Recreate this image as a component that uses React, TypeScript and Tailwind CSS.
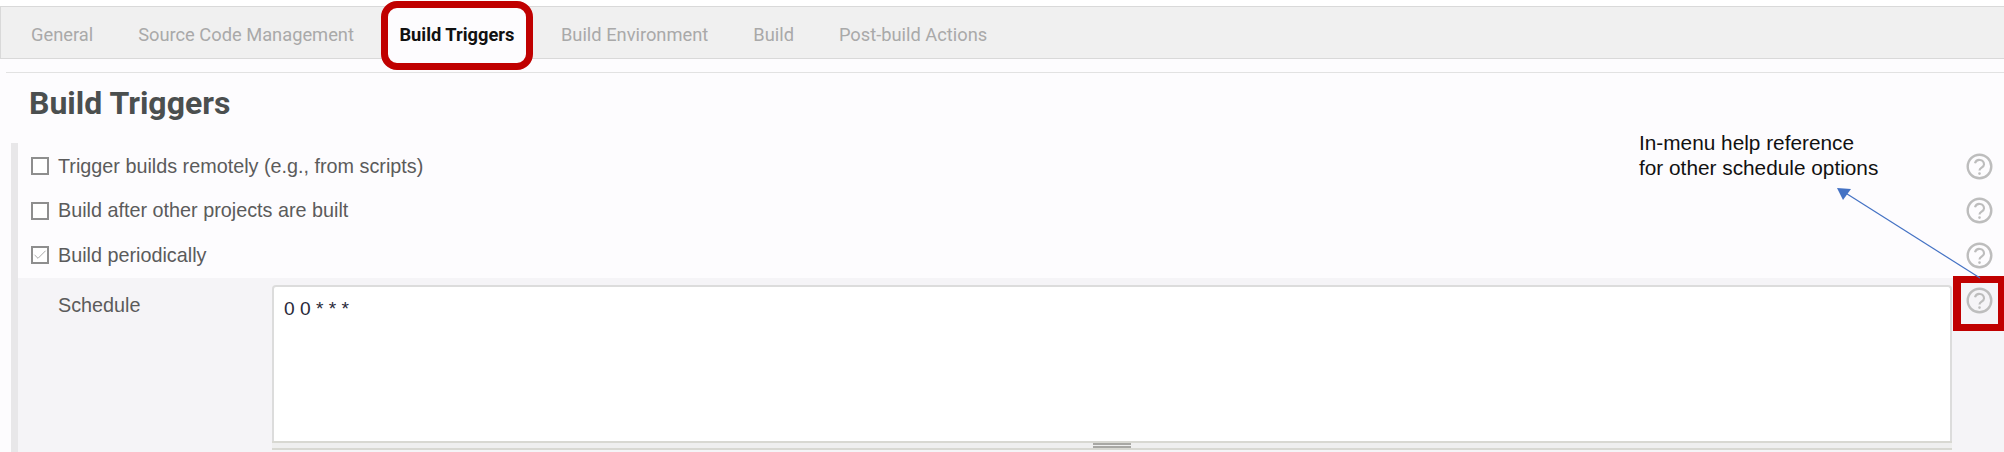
import { Check } from 'lucide-react';

const tabs = ['General', 'Source Code Management', 'Build Triggers', 'Build Environment', 'Build', 'Post-build Actions'];

const triggers = [
  { label: 'Trigger builds remotely (e.g., from scripts)', checked: false },
  { label: 'Build after other projects are built', checked: false },
  { label: 'Build periodically', checked: true },
];

function HelpIcon() {
  return (
    <svg className="w-[31px] h-[31px] shrink-0 text-[#bdbdbd]" viewBox="0 0 31 31" fill="none" stroke="currentColor">
      <circle cx="15.5" cy="15.5" r="11.8" strokeWidth="2.4" />
      <path d="M11 12.2a4.6 4.6 0 0 1 9 1.2c0 3-4.5 3.4-4.5 6" strokeWidth="2.1" />
      <circle cx="15.5" cy="22.6" r="1.3" fill="currentColor" stroke="none" />
    </svg>
  );
}

export default function App() {
  return (
    <div className="relative w-[2004px] h-[452px] overflow-hidden bg-[#fdfcfe] font-['Liberation_Sans',sans-serif]">
      {/* tab bar */}
      <div className="h-[6px] bg-white" />
      <div className="h-[53px] pt-[5px] pl-[30px] flex items-center gap-[45px] bg-[#f0f0f0] border-t border-b border-l border-[#d9d9d9] font-['Roboto',sans-serif] text-[18.3px] text-[#a9a9a9]">
        {tabs.map((tab) =>
          tab === 'Build Triggers' ? (
            <div
              key={tab}
              className="-ml-[18px] -mr-[17px] h-[69px] w-[152px] flex items-center justify-center shrink-0 bg-[#fdfcfe] border-[7px] border-[#c00000] rounded-[16px] font-bold text-[#111111]"
            >
              {tab}
            </div>
          ) : (
            <span key={tab} className="shrink-0">{tab}</span>
          )
        )}
      </div>

      <div className="ml-[6px] mt-[13px] h-px bg-[#e2e2e2]" />
      <h2 className="ml-[29px] mt-[8px] h-[44px] leading-[44px] font-['Roboto',sans-serif] font-bold text-[32px] text-[#4b4f4f]">
        Build Triggers
      </h2>

      {/* form */}
      <div className="mt-[18px] ml-[11px] border-l-[7px] border-[#e8e7e9]">
        <div className="pt-[1px]">
          {triggers.map((t) => (
            <div key={t.label} className="h-[44.5px] pl-[13px] pr-[9px] flex items-center text-[19.8px] text-[#5b5b5b]">
              <span className="w-[18px] h-[18px] mr-[9px] shrink-0 flex items-center justify-center border-2 border-[#8e8e8e] bg-white">
                {t.checked && <Check className="w-[16px] h-[16px] shrink-0 text-[#a9a9a9]" strokeWidth={1.5} />}
              </span>
              <span className="flex-1 pt-[1px]">{t.label}</span>
              <HelpIcon />
            </div>
          ))}
        </div>

        <div className="flex h-[174px] pt-[7px] pl-[40px] pr-[4px] bg-[#f5f4f7] text-[19.8px] text-[#5b5b5b]">
          <div className="w-[214px] pt-[6px]">Schedule</div>
          <div className="w-[1680px]">
            <div className="h-[156px] px-[10px] py-[8px] bg-white border-2 border-b-0 border-[#dcdcdc] rounded-t-[4px] text-[19.2px] text-[#2a2a3a]">
              0 0 * * *
            </div>
            <div className="h-[9px] flex justify-center items-center bg-[#efefef] border-y-2 border-[#d8d8d2]">
              <div className="w-[38px] h-[5px] border-y-2 border-[#a8a8a4]" />
            </div>
          </div>
          <div className="pl-[12px]">
            <HelpIcon />
          </div>
        </div>
      </div>

      {/* annotations */}
      <div className="absolute left-[1953px] top-[276px] w-[51px] h-[55px] border-y-[7px] border-l-[8px] border-r-[6px] border-[#c00000]" />
      <div className="absolute left-[1639px] top-[130px] text-[20.8px] leading-[25px] text-[#111111]">
        In-menu help reference
        <br />
        for other schedule options
      </div>
      <svg className="absolute left-[1830px] top-[180px]" width="160" height="100" viewBox="0 0 160 100">
        <line x1="150" y1="98" x2="14" y2="12" stroke="#4472c4" strokeWidth="1.2" />
        <polygon points="7,8 21,9 13,20" fill="#4472c4" />
      </svg>
    </div>
  );
}
